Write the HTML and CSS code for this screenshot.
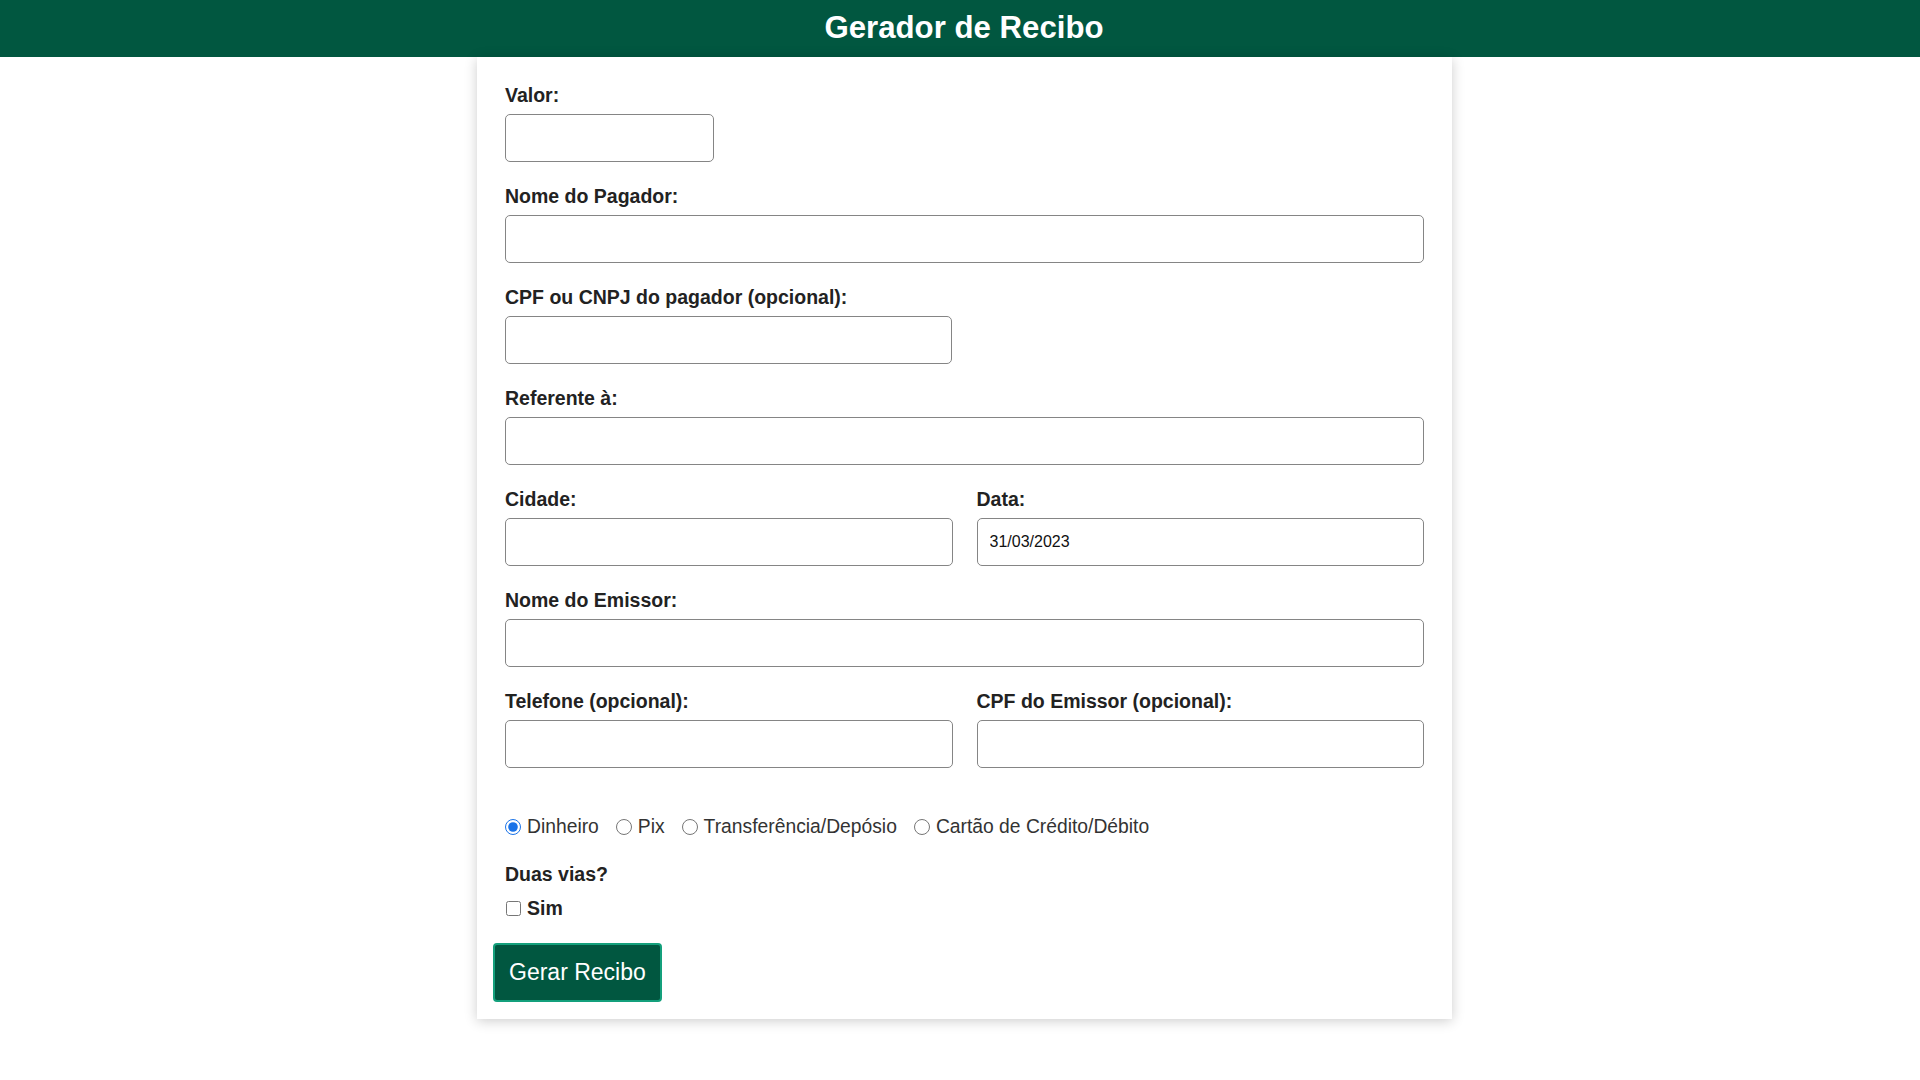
FILE: index.html
```html
<!DOCTYPE html>
<html lang="pt-BR">
<head>
<meta charset="utf-8">
<title>Gerador de Recibo</title>
<link rel="stylesheet" href="styles.css">
</head>
<body>
<header class="topbar">
  <h1 class="title">Gerador de Recibo</h1>
</header>
<main class="page">
  <form class="card">
    <div class="field">
      <label class="lbl" for="valor">Valor:</label>
      <input class="inp inp-sm" id="valor" type="text">
    </div>
    <div class="field">
      <label class="lbl" for="pagador">Nome do Pagador:</label>
      <input class="inp" id="pagador" type="text">
    </div>
    <div class="field">
      <label class="lbl" for="cpfpag">CPF ou CNPJ do pagador (opcional):</label>
      <input class="inp inp-half" id="cpfpag" type="text">
    </div>
    <div class="field">
      <label class="lbl" for="ref">Referente à:</label>
      <input class="inp" id="ref" type="text">
    </div>
    <div class="row">
      <div class="field">
        <label class="lbl" for="cidade">Cidade:</label>
        <input class="inp" id="cidade" type="text">
      </div>
      <div class="field">
        <label class="lbl" for="data">Data:</label>
        <input class="inp inp-date" id="data" type="text" value="31/03/2023">
      </div>
    </div>
    <div class="field">
      <label class="lbl" for="emissor">Nome do Emissor:</label>
      <input class="inp" id="emissor" type="text">
    </div>
    <div class="row">
      <div class="field">
        <label class="lbl" for="tel">Telefone (opcional):</label>
        <input class="inp" id="tel" type="text">
      </div>
      <div class="field">
        <label class="lbl" for="cpfem">CPF do Emissor (opcional):</label>
        <input class="inp" id="cpfem" type="text">
      </div>
    </div>
    <div class="radios">
      <label class="opt"><input class="rad" type="radio" name="pg" checked>Dinheiro</label>
      <label class="opt"><input class="rad" type="radio" name="pg">Pix</label>
      <label class="opt"><input class="rad" type="radio" name="pg">Transferência/Depósio</label>
      <label class="opt"><input class="rad" type="radio" name="pg">Cartão de Crédito/Débito</label>
    </div>
    <div class="vias">
      <div class="vias-q">Duas vias?</div>
      <label class="chk-lbl"><input class="chk" type="checkbox">Sim</label>
    </div>
    <button class="btn" type="button">Gerar Recibo</button>
  </form>
</main>
</body>
</html>
```

FILE: styles.css
```css
* { box-sizing: border-box; }

html, body {
  margin: 0;
  padding: 0;
  background: #ffffff;
  font-family: "Liberation Sans", Arial, sans-serif;
  color: #222222;
}

body {
  min-height: 1080px;
}

.topbar {
  height: 57px;
  background: #015740;
  display: flex;
  align-items: center;
  justify-content: center;
  padding-left: 8px;
  padding-bottom: 2px;
}

.title {
  margin: 0;
  color: #ffffff;
  font-size: 31.2px;
  font-weight: bold;
  line-height: 1;
}

.page {
  display: flex;
  justify-content: center;
  padding-left: 9px;
}

.card {
  width: 975px;
  background: #ffffff;
  box-shadow: 0 2px 12px rgba(0, 0, 0, 0.2);
  padding: 27px 28px 17px 28px;
  display: flex;
  flex-direction: column;
}

.field {
  display: flex;
  flex-direction: column;
  margin-bottom: 23px;
}

.row {
  display: grid;
  grid-template-columns: 1fr 1fr;
  column-gap: 24px;
}

.lbl {
  font-size: 19.5px;
  font-weight: bold;
  line-height: 22px;
  margin-bottom: 8px;
  color: #222222;
}

.inp {
  height: 48px;
  width: 100%;
  border: 1px solid #858585;
  border-radius: 5px;
  padding: 0 12px;
  font-family: "Liberation Sans", Arial, sans-serif;
  font-size: 16px;
  color: #111111;
  background: #ffffff;
  outline: none;
}

.inp-sm { width: 209px; }
.inp-half { width: 447px; }

.radios {
  display: flex;
  align-items: center;
  margin-top: 25px;
  font-size: 19.3px;
  line-height: 22px;
  color: #333333;
}

.opt {
  display: flex;
  align-items: center;
  margin-right: 17px;
}

.rad {
  width: 16px;
  height: 16px;
  margin: 0 6px 0 0;
  accent-color: #1a73e8;
}

.vias {
  margin-top: 25px;
  display: flex;
  flex-direction: column;
}

.vias-q {
  font-size: 19.5px;
  font-weight: bold;
  line-height: 22px;
}

.chk-lbl {
  margin-top: 12px;
  display: flex;
  align-items: center;
  font-size: 19.5px;
  font-weight: bold;
  line-height: 22px;
}

.chk {
  width: 15px;
  height: 15px;
  margin: 0 6px 0 1px;
}

.btn {
  align-self: flex-start;
  margin-top: 24px;
  margin-left: -12px;
  height: 59px;
  padding: 0 14px;
  background: #015740;
  color: #ffffff;
  border: 2px solid #14a07c;
  border-radius: 4px;
  font-family: "Liberation Sans", Arial, sans-serif;
  font-size: 23px;
}
```
